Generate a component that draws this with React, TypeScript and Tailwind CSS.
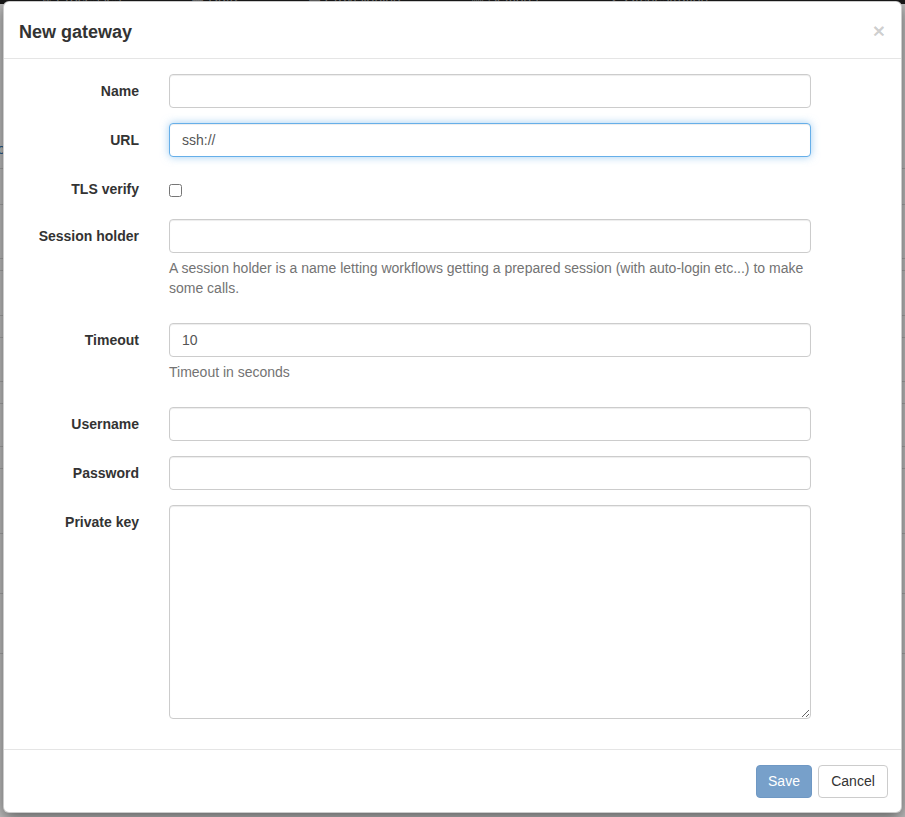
import React from "react";

const font = { fontFamily: '"Liberation Sans", Arial, sans-serif' };

const inputCls =
  "block w-full h-[34px] px-3 py-[6px] text-[14px] text-[#555] bg-white border border-[#ccc] rounded-[4px] shadow-[inset_0_1px_1px_rgba(0,0,0,0.075)] outline-none";

function Label({ children }: { children: React.ReactNode }) {
  return (
    <label className="w-[150px] shrink-0 px-[15px] pt-[7px] text-right text-[14px] leading-5 font-bold text-[#333]">
      {children}
    </label>
  );
}

function Field({
  label,
  children,
  help,
}: {
  label: string;
  children: React.ReactNode;
  help?: string;
}) {
  return (
    <div className="flex mb-[15px]">
      <Label>{label}</Label>
      <div className="w-[672px] px-[15px]">
        {children}
        {help && (
          <p className="mt-[5px] mb-[10px] text-[14px] leading-5 text-[#737373]">{help}</p>
        )}
      </div>
    </div>
  );
}

const bgRows = [168, 36, 54, 12, 45, 22, 44, 22, 43, 22, 65, 60, 60, 60];

export default function App() {
  return (
    <div className="relative h-[817px] overflow-hidden bg-white" style={font}>
      {/* page behind the modal */}
      <div className="h-[4px] overflow-hidden bg-[#222]">
        <div className="flex gap-[70px] pl-[40px] -mt-[12px] text-[14px] text-[#9d9d9d] whitespace-nowrap">
          <span>⇅ Processes</span>
          <span>▦ Data</span>
          <span>▤ Provisioning</span>
          <span>▥ Settings</span>
          <span>✣ Orchestration</span>
        </div>
      </div>
      <div className="text-[14px] text-[#337ab7]">
        {bgRows.map((h, i) => (
          <div
            key={i}
            className={i === 0 ? "flex items-end pb-[8px]" : "border-t border-[#ddd]"}
            style={{ height: i === 0 ? h - 4 : h }}
          >
            {i === 0 && <span className="-ml-[18px]">Info</span>}
          </div>
        ))}
      </div>

      {/* backdrop + modal */}
      <div className="absolute inset-0 bg-black/25 pt-[1px] pl-[3px]">
        <div className="w-[899px] bg-white border border-black/20 rounded-[6px] shadow-[0_5px_15px_rgba(0,0,0,0.5)] text-[#333]">
          <div className="flex items-center justify-between h-[57px] px-[15px] border-b border-[#e5e5e5]">
            <h4 className="mt-[3px] text-[18px] leading-[26px] font-semibold text-[#333]">New gateway</h4>
            <button className="text-[21px] leading-none font-bold text-black/20 mr-[1px]">×</button>
          </div>

          <div className="py-[15px]">
            <Field label="Name">
              <input className={inputCls} />
            </Field>
            <Field label="URL">
              <input
                className={inputCls + " !border-[#66afe9] !shadow-[inset_0_1px_1px_rgba(0,0,0,0.075),0_0_8px_rgba(102,175,233,0.6)]"}
                defaultValue="ssh://"
              />
            </Field>
            <div className="flex h-[32px] mb-[15px]">
              <Label>TLS verify</Label>
              <div className="px-[15px] pt-[12px]">
                <input type="checkbox" className="block m-0 w-[13px] h-[13px]" />
              </div>
            </div>
            <Field
              label="Session holder"
              help="A session holder is a name letting workflows getting a prepared session (with auto-login etc...) to make some calls."
            >
              <input className={inputCls} />
            </Field>
            <Field label="Timeout" help="Timeout in seconds">
              <input className={inputCls} defaultValue="10" />
            </Field>
            <Field label="Username">
              <input className={inputCls} />
            </Field>
            <Field label="Password">
              <input className={inputCls} type="password" />
            </Field>
            <Field label="Private key">
              <textarea className={inputCls + " !h-[214px] resize-y"} />
            </Field>
          </div>

          <div className="flex justify-end gap-[6px] pt-[15px] pb-[14px] pl-[15px] pr-[13px] border-t border-[#e5e5e5]">
            <button className="h-[33px] w-[56px] text-[14px] text-white bg-[#77a0ca] border border-[#6f98c4] rounded-[4px]">
              Save
            </button>
            <button className="h-[33px] w-[70px] text-[14px] text-[#333] bg-white border border-[#ccc] rounded-[4px]">
              Cancel
            </button>
          </div>
        </div>
      </div>
    </div>
  );
}
